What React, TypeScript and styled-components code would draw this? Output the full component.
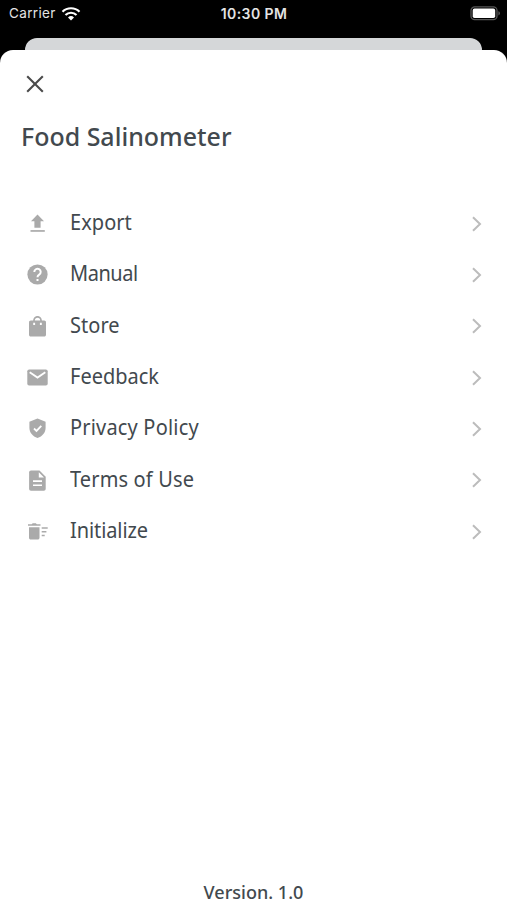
import React from 'react';
import styled, { createGlobalStyle } from 'styled-components';

const GlobalStyle = createGlobalStyle`
  * { box-sizing: border-box; }
  body { margin: 0; background: #000; overflow: hidden; }
`;

const Screen = styled.div`
  width: 507px;
  height: 900px;
  display: flex;
  flex-direction: column;
  background: #000;
  color: #42494e;
  font-family: 'Noto Sans', sans-serif;
  overflow: hidden;
`;

const StatusBar = styled.header`
  height: 38px;
  flex: none;
  display: grid;
  grid-template-columns: 1fr auto 1fr;
  align-items: start;
  padding: 4px 7px 0 9px;
  color: #e4e4e4;
  font: 400 13.5px/19px Inter, sans-serif;
`;

const Carrier = styled.div`
  display: flex;
  align-items: center;
  gap: 5px;
  letter-spacing: 0.35px;
`;

const Clock = styled.div`
  font-size: 14px;
  font-weight: 600;
  letter-spacing: 0.4px;
  line-height: 20px;
  margin-left: -1px;
`;

const BatteryBox = styled.div`
  display: flex;
  justify-content: flex-end;
  padding-top: 2px;
  margin-right: -1px;
`;

const BackSheet = styled.div`
  height: 12px;
  flex: none;
  margin: 0 25px;
  border-radius: 12px 12px 0 0;
  background: #d5d7d9;
`;

const Sheet = styled.main`
  flex: 1;
  display: flex;
  flex-direction: column;
  border-radius: 13px 13px 0 0;
  background: #fff;
`;

const CloseButton = styled.button`
  width: 18px;
  height: 18px;
  margin: 25px 0 0 26px;
  padding: 0;
  border: 0;
  background: none;
  display: flex;
`;

const Title = styled.h1`
  margin: 25px 0 0 21px;
  font-size: 26px;
  line-height: 36px;
  font-weight: 500;
  transform: scaleX(0.96);
  transform-origin: left;
  white-space: nowrap;
`;

const Menu = styled.nav`
  margin-top: 43px;
  display: grid;
  grid-auto-rows: 51.33px;
`;

const MenuRow = styled.div`
  display: grid;
  grid-template-columns: 21px 1fr 12px;
  column-gap: 21.5px;
  align-items: center;
  padding: 0 24px 0 27px;
`;

const Label = styled.span<{ $spacing: number }>`
  justify-self: start;
  margin-bottom: 1px;
  font-size: 21.5px;
  line-height: 30px;
  letter-spacing: ${(p) => p.$spacing}px;
  transform: scaleX(0.93);
  transform-origin: left;
  white-space: nowrap;
`;

const Glyph = styled.svg`
  display: block;
  margin-top: 2px;
`;

const Version = styled.footer`
  margin-top: auto;
  height: 17px;
  text-align: center;
  font-size: 18.5px;
  line-height: 17px;
  font-weight: 500;
  transform: scaleX(0.975);
`;

const icons: Record<string, React.ReactNode> = {
  export: (
    <>
      <path d="M10.5 1.5 17 8.3h-3.4v6.4H7.4V8.3H4z" />
      <path d="M3.5 17.1h14.3v1.7H3.5z" />
    </>
  ),
  help: (
    <>
      <circle cx="10.5" cy="10.5" r="10.1" />
      <path d="M7.3 8a3.2 3.2 0 1 1 4.9 2.7c-1.2.8-1.7 1.2-1.7 2.6" fill="none" stroke="#fff" strokeWidth="2" />
      <path d="M9.5 15h2v2h-2z" fill="#fff" />
    </>
  ),
  bag: (
    <>
      <path d="M3.8 4.5h13.4c1 0 1.8.7 1.8 1.8v12.4c0 1-.8 1.8-1.8 1.8H3.8c-1 0-1.8-.8-1.8-1.8V6.3c0-1.1.8-1.8 1.8-1.8z" />
      <path d="M7 6V4.3a3.5 3.5 0 0 1 7 0V6" fill="none" stroke="#aaa" strokeWidth="1.7" />
      <path d="M6.2 6.7h1.9v2.2H6.2zM12.9 6.7h1.9v2.2h-1.9z" fill="#fff" />
    </>
  ),
  mail: (
    <>
      <rect x=".3" y="2.5" width="20.4" height="16" rx="1.8" />
      <path d="m2.7 5.3 7.8 5.2 7.8-5.2" fill="none" stroke="#fff" strokeWidth="1.9" />
    </>
  ),
  shield: (
    <>
      <path d="M10.5.5 18.6 3.7v6.1c0 4.8-3.2 8.6-8.1 10.3-4.9-1.7-8.1-5.5-8.1-10.3V3.7z" />
      <path d="m7 10.5 2.5 2.4 4.8-5" fill="none" stroke="#fff" strokeWidth="1.8" />
    </>
  ),
  document: (
    <>
      <path d="M4 .5h8.5L18.7 6.7v12c0 1.1-.8 2-1.9 2H4c-1.1 0-1.9-.9-1.9-2V2.5c0-1.1.8-2 1.9-2z" />
      <path d="M11.8 2.2v5.2H17zM6 10.3h9V12H6zM6 14.4h9v1.7H6z" fill="#fff" />
    </>
  ),
  trash: (
    <>
      <path d="M2 6.2h10.5v10.5c0 1-.8 1.8-1.8 1.8H3.8c-1 0-1.8-.8-1.8-1.8zM1 3.2h3.7l1-1h3.1l1 1h3.7v1.6H1z" />
      <path d="M14.7 6.3h6v1.5h-6zM14.7 10h4.7v1.5h-4.7zM14.7 13.7h3v1.5h-3z" />
    </>
  ),
};

const rows: [string, string, number][] = [
  ['export', 'Export', 0.05],
  ['help', 'Manual', -0.5],
  ['bag', 'Store', 0.05],
  ['mail', 'Feedback', 0],
  ['shield', 'Privacy Policy', 0.2],
  ['document', 'Terms of Use', 0.15],
  ['trash', 'Initialize', -0.1],
];

export default function App() {
  return (
    <>
      <GlobalStyle />
      <Screen>
        <StatusBar>
          <Carrier>
            <span>Carrier</span>
            <svg width="20" height="14" viewBox="0 0 20 14" fill="none" stroke="#fff" strokeWidth="2.2">
              <path d="M1.5 4.7a12.2 12.2 0 0 1 17 0M4.5 8a7.8 7.8 0 0 1 11 0" />
              <path d="M7 10.4a4.3 4.3 0 0 1 6 0l-3 3z" fill="#fff" stroke="none" />
            </svg>
          </Carrier>
          <Clock>10:30 PM</Clock>
          <BatteryBox>
            <svg width="31" height="15" viewBox="0 0 31 15">
              <rect x="1" y=".9" width="26" height="12.8" rx="3.7" fill="none" stroke="#565656" strokeWidth="1.3" />
              <rect x="2.7" y="2.6" width="22.5" height="9.4" rx="1.8" fill="#fff" />
              <path d="M28.4 5.2c2.1.6 2.1 3.6 0 4.2z" fill="#565656" />
            </svg>
          </BatteryBox>
        </StatusBar>
        <BackSheet />
        <Sheet>
          <CloseButton aria-label="Close">
            <svg width="18" height="18" viewBox="0 0 18 18" fill="none" stroke="#4b4b4b" strokeWidth="2.1">
              <path d="m1.2 1.2 15.6 15.6M16.8 1.2 1.2 16.8" />
            </svg>
          </CloseButton>
          <Title>Food Salinometer</Title>
          <Menu>
            {rows.map(([icon, label, spacing]) => (
              <MenuRow key={label}>
                <Glyph width="21" height="21" viewBox="0 0 21 21" fill="#aaa">{icons[icon]}</Glyph>
                <Label $spacing={spacing}>{label}</Label>
                <Glyph width="12" height="16" viewBox="0 0 12 16" fill="none" stroke="#bcbcbc" strokeWidth="2">
                  <path d="m2 1.3 7 6.7-7 6.7" />
                </Glyph>
              </MenuRow>
            ))}
          </Menu>
          <Version>Version. 1.0</Version>
        </Sheet>
      </Screen>
    </>
  );
}
